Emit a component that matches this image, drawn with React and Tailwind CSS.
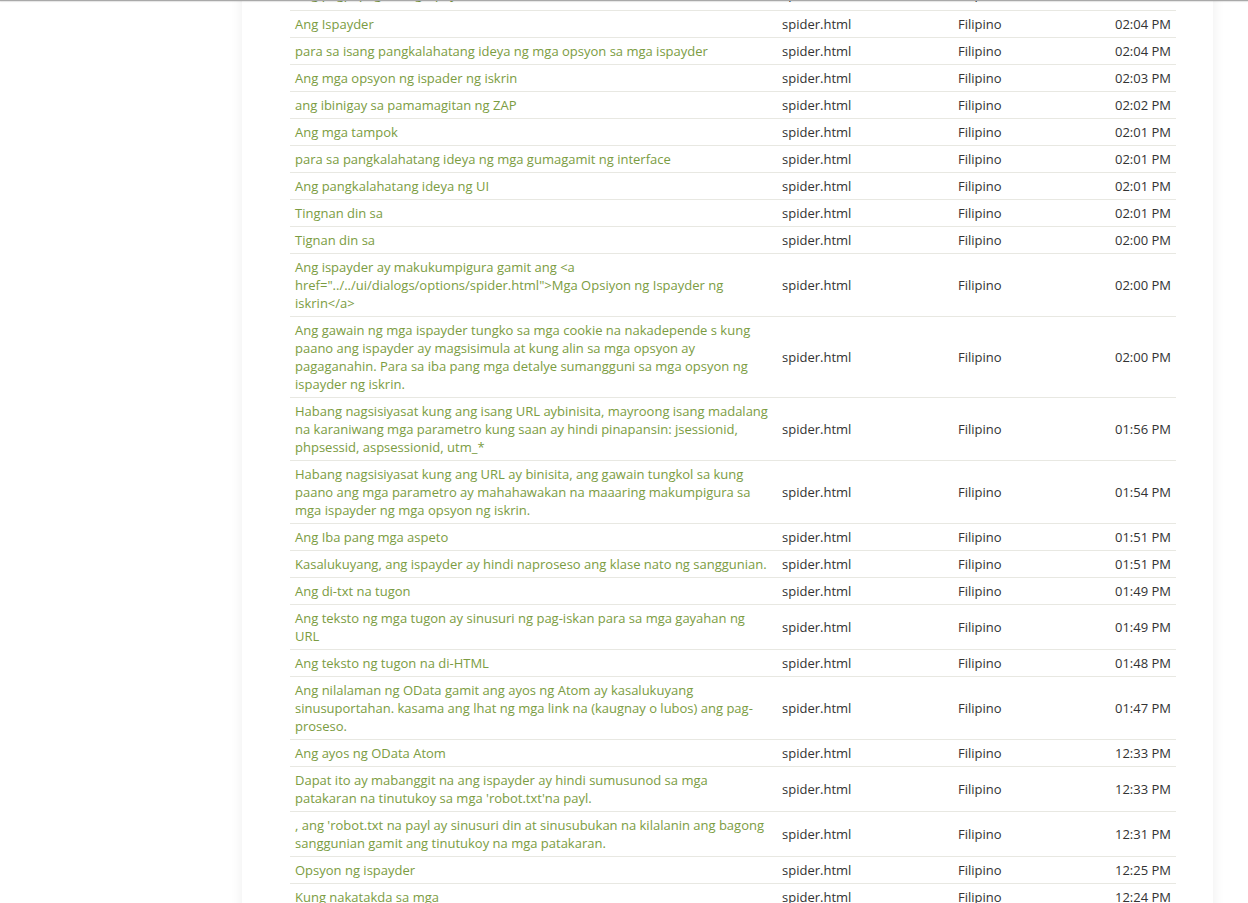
import React from "react";

const rows = [
  ["Ang pagpapagana ng ispayder", "02:05 PM"],
  ["Ang Ispayder", "02:04 PM"],
  ["para sa isang pangkalahatang ideya ng mga opsyon sa mga ispayder", "02:04 PM"],
  ["Ang mga opsyon ng ispader ng iskrin", "02:03 PM"],
  ["ang ibinigay sa pamamagitan ng ZAP", "02:02 PM"],
  ["Ang mga tampok", "02:01 PM"],
  ["para sa pangkalahatang ideya ng mga gumagamit ng interface", "02:01 PM"],
  ["Ang pangkalahatang ideya ng UI", "02:01 PM"],
  ["Tingnan din sa", "02:01 PM"],
  ["Tignan din sa", "02:00 PM"],
  ['Ang ispayder ay makukumpigura gamit ang <a href="../../ui/dialogs/options/spider.html">Mga Opsiyon ng Ispayder ng iskrin</a>', "02:00 PM"],
  ["Ang gawain ng mga ispayder tungko sa mga cookie na nakadepende s kung paano ang ispayder ay magsisimula at kung alin sa mga opsyon ay pagaganahin. Para sa iba pang mga detalye sumangguni sa mga opsyon ng ispayder ng iskrin.", "02:00 PM"],
  ["Habang nagsisiyasat kung ang isang URL aybinisita, mayroong isang madalang na karaniwang mga parametro kung saan ay hindi pinapansin: jsessionid, phpsessid, aspsessionid, utm_*", "01:56 PM"],
  ["Habang nagsisiyasat kung ang URL ay binisita, ang gawain tungkol sa kung paano ang mga parametro ay mahahawakan na maaaring makumpigura sa mga ispayder ng mga opsyon ng iskrin.", "01:54 PM"],
  ["Ang Iba pang mga aspeto", "01:51 PM"],
  ["Kasalukuyang, ang ispayder ay hindi naproseso ang klase nato ng sanggunian.", "01:51 PM"],
  ["Ang di-txt na tugon", "01:49 PM"],
  ["Ang teksto ng mga tugon ay sinusuri ng pag-iskan para sa mga gayahan ng URL", "01:49 PM"],
  ["Ang teksto ng tugon na di-HTML", "01:48 PM"],
  ["Ang nilalaman ng OData gamit ang ayos ng Atom ay kasalukuyang sinusuportahan. kasama ang lhat ng mga link na (kaugnay o lubos) ang pag-proseso.", "01:47 PM"],
  ["Ang ayos ng OData Atom", "12:33 PM"],
  ["Dapat ito ay mabanggit na ang ispayder ay hindi sumusunod sa mga patakaran na tinutukoy sa mga 'robot.txt'na payl.", "12:33 PM"],
  [", ang 'robot.txt na payl ay sinusuri din at sinusubukan na kilalanin ang bagong sanggunian gamit ang tinutukoy na mga patakaran.", "12:31 PM"],
  ["Opsyon ng ispayder", "12:25 PM"],
  ["Kung nakatakda sa mga", "12:24 PM"],
  ["Ang mga opsyon", "12:23 PM"],
];

export default function App() {
  return (
    <div
      className="relative h-[903px] overflow-hidden bg-white text-[13px] leading-[18px]"
      style={{ fontFamily: '"Open Sans", "Noto Sans", sans-serif' }}
    >
      <div className="ml-[242px] -mt-[17px] w-[971px] bg-white pl-[48px] pr-[37px] shadow-[0_0_12px_rgba(0,0,0,0.07)]">
        <table className="w-[886px] table-fixed border-collapse">
          <colgroup>
            <col className="w-[487px]" />
            <col className="w-[176px]" />
            <col className="w-[140px]" />
            <col />
          </colgroup>
          <tbody>
            {rows.map(([text, time], i) => {
              const pad = i === 0 ? "pt-px pb-[7px]" : "py-[4px]";
              return (
                <tr key={i} className="border-t border-[#e8e8e2]">
                  <td className={`px-[5px] ${pad} align-middle text-[#7b9c42]`}>{text}</td>
                  <td className={`px-[5px] ${pad} align-middle text-[#333]`}>spider.html</td>
                  <td className={`px-[5px] ${pad} align-middle text-[#333]`}>Filipino</td>
                  <td className={`px-[5px] ${pad} text-right align-middle text-[#333] whitespace-nowrap`}>{time}</td>
                </tr>
              );
            })}
          </tbody>
        </table>
      </div>
      <div className="absolute left-0 right-0 top-0 h-px bg-[#a9a9a9] shadow-[0_1px_1px_rgba(0,0,0,0.12)]" />
    </div>
  );
}
